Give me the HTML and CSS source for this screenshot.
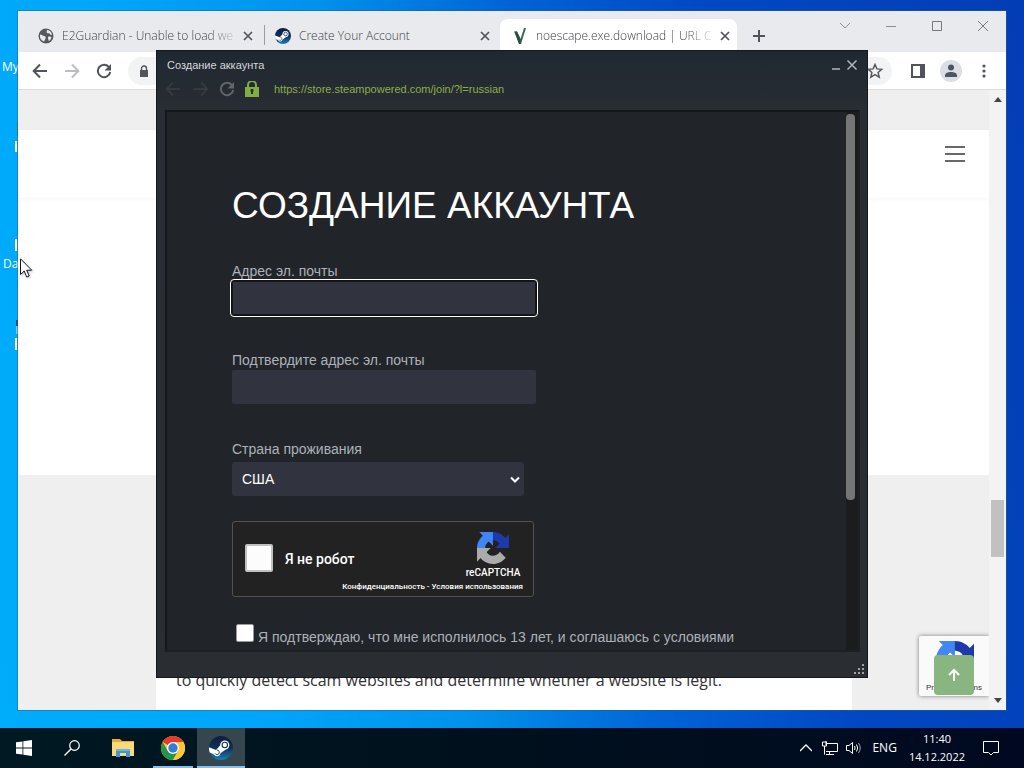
FILE: index.html
```
<!DOCTYPE html>
<html lang="ru">
<head>
<meta charset="utf-8">
<title>Создание аккаунта</title>
<link rel="stylesheet" href="styles.css">
</head>
<body>
<svg class="defs" aria-hidden="true">
  <defs>
    <linearGradient id="steam-bg" x1="0" y1="0" x2="0" y2="1">
      <stop offset="0" stop-color="#101d3c"/><stop offset=".5" stop-color="#0d2f5c"/><stop offset="1" stop-color="#1a80b4"/>
    </linearGradient>
    <symbol id="steam" viewBox="0 0 24 24">
      <circle cx="12" cy="12" r="12" fill="url(#steam-bg)"/>
      <path d="M0 11.2 7 14 12 8.5 19.5 11.500 11.500 17.200A3.500 3.500 0 0 1 5 18.500L.7 16.500A12 12 0 0 1 0 11.200Z" fill="#fff"/>
      <circle cx="15.800" cy="9" r="4.600" fill="#fff"/>
      <circle cx="15.800" cy="9" r="2.700" fill="#fff" stroke="#14305a" stroke-width="1.100"/>
      <path d="M6 17.300a2.300 2.300 0 1 0 2-3.300" fill="none" stroke="#14477a" stroke-width="1"/>
    </symbol>
    <symbol id="recaptcha" viewBox="0 0 64 64">
      <path fill="#1c3aa9" d="M64 31.955l-.033-1.370V4.687l-7.160 7.160C50.948 4.674 42.033.093 32.050.093c-10.400 0-19.622 4.960-25.458 12.640l11.736 11.860a15.550 15.550 0 0 1 4.754-5.334c2.050-1.600 4.952-2.906 8.968-2.906.485 0 .860.057 1.135.163 4.976.393 9.288 3.140 11.828 7.124l-8.307 8.307L64 31.953"/>
      <path fill="#4285f4" d="M31.862.094l-1.370.033H4.594l7.160 7.160C4.580 13.147 0 22.060 0 32.046c0 10.400 4.960 19.622 12.640 25.458L24.500 45.768a15.550 15.550 0 0 1-5.334-4.754c-1.600-2.050-2.906-4.952-2.906-8.968 0-.485.057-.860.163-1.135.393-4.976 3.140-9.288 7.124-11.828l8.307 8.307L31.860.095"/>
      <path fill="#ababab" d="M.001 32.045l.033 1.370v25.898l7.160-7.160c5.860 7.173 14.774 11.754 24.760 11.754 10.400 0 19.622-4.960 25.458-12.640l-11.736-11.860a15.550 15.550 0 0 1-4.754 5.334c-2.050 1.600-4.952 2.906-8.968 2.906-.485 0-.860-.057-1.135-.163-4.976-.393-9.288-3.140-11.828-7.124l8.307-8.307c-10.522.040-22.400.066-27.295-.005"/>
    </symbol>
    <symbol id="close" viewBox="0 0 12 12"><path d="M2 2l8 8M10 2l-8 8" stroke="currentColor" stroke-width="1.700"/></symbol>
    <symbol id="back" viewBox="0 0 16 16"><path d="M15 8H2M8 1.500 1.700 8 8 14.500" fill="none" stroke="currentColor" stroke-width="2"/></symbol>
    <symbol id="reload" viewBox="0 0 16 16"><path d="M13.200 4.500A6.200 6.200 0 1 0 14.200 9" fill="none" stroke="currentColor" stroke-width="2"/><path d="M15 1v6.500H8.500Z" fill="currentColor"/></symbol>
  </defs>
</svg>

<div class="desktop">
  <span class="shortcut shortcut-my">My</span>
  <span class="shortcut shortcut-da">Da</span>
  <svg class="slivers" viewBox="0 0 4 240" aria-hidden="true">
    <path d="M3 2v14" stroke="#159a4c" stroke-width="2"/>
    <path d="M1 21v11M1 119v12M1 218v12" stroke="#fff" stroke-width="2"/>
    <path d="M2 200v14" stroke="#e5f4ff" stroke-width="1"/><path d="M2 200v6" stroke="#254869" stroke-width="2"/>
  </svg>

  <section class="browser" aria-label="Chrome">
    <div class="tabs">
      <div class="tab tab-first">
        <svg class="fav" viewBox="0 0 16 16"><circle cx="8" cy="8" r="7.500" fill="#55595e"/><path d="M2 6.500c2 0 2.500 1.500 4 1.500s2 1 1.500 2.500L6 13.500C3 12.500 1.500 10 2 6.500ZM8.500 2c1 1-.5 2 .5 3s2.500-.5 3 1 1.500 1 2 .5C13.500 4 11.500 2 8.500 2ZM10 9c1-.8 3-.5 3.500.5-.5 1.500-1.500 3-3 3.500C11 11.500 9.500 10.500 10 9Z" fill="#e8eaee"/></svg>
        <span class="tab-title fade">E2Guardian - Unable to load we</span>
        <button class="icon-btn" aria-label="Close tab"><svg class="x"><use href="#close"/></svg></button>
      </div>
      <div class="tab tab-second">
        <svg class="fav"><use href="#steam"/></svg>
        <span class="tab-title">Create Your Account</span>
        <button class="icon-btn" aria-label="Close tab"><svg class="x"><use href="#close"/></svg></button>
      </div>
      <div class="tab tab-active">
        <svg class="fav" viewBox="0 0 16 16"><path d="M2 3.500h3L8.500 11 12 0h2L9 16H7Z" fill="#3c6659"/><path d="M3 3.500h2L8.500 11v5H7Z" fill="#304941"/></svg>
        <span class="tab-title fade">noescape.exe.download | URL C</span>
        <button class="icon-btn" aria-label="Close tab"><svg class="x"><use href="#close"/></svg></button>
      </div>
      <button class="icon-btn new-tab" aria-label="New tab"><svg class="i14" viewBox="0 0 14 14"><path d="M7 1v12M1 7h12" stroke="#50545a" stroke-width="2"/></svg></button>
      <div class="win-controls">
        <button class="icon-btn" aria-label="Search tabs"><svg class="i12" viewBox="0 0 12 12"><path d="M1 3l5 5 5-5" fill="none" stroke="#8b8d91"/></svg></button>
        <button class="icon-btn" aria-label="Minimize"><svg class="i12" viewBox="0 0 12 12"><path d="M1 6.500h10" stroke="#8b8d91"/></svg></button>
        <button class="icon-btn" aria-label="Maximize"><svg class="i12" viewBox="0 0 12 12"><path d="M1.500 1.500h9v9h-9Z" fill="none" stroke="#76787c"/></svg></button>
        <button class="icon-btn" aria-label="Close"><svg class="i12" viewBox="0 0 12 12"><path d="M1 1l10 10M11 1 1 11" stroke="#76787c"/></svg></button>
      </div>
    </div>
    <div class="toolbar">
      <button class="icon-btn" aria-label="Back"><svg class="i16"><use href="#back"/></svg></button>
      <button class="icon-btn forward pale" aria-label="Forward"><svg class="i16"><use href="#back"/></svg></button>
      <button class="icon-btn" aria-label="Reload"><svg class="i16"><use href="#reload"/></svg></button>
      <div class="omnibox">
        <svg class="i12" viewBox="0 0 12 12"><path d="M2 5h8v7H2Z" fill="#53575c"/><path d="M3.500 5.500V3.500a2.500 2.500 0 0 1 5 0v2" fill="none" stroke="#53575c" stroke-width="1.400"/></svg>
        <button class="icon-btn" aria-label="Bookmark"><svg class="i16" viewBox="0 0 16 16"><path d="M8 1.500l1.900 4.400 4.800.4-3.600 3.100 1.100 4.700L8 11.600l-4.200 2.500 1.100-4.700L1.300 6.300l4.800-.4Z" fill="none" stroke="#55595e" stroke-width="1.500"/></svg></button>
      </div>
      <button class="icon-btn side-btn" aria-label="Side panel"><svg class="i14" viewBox="0 0 14 14"><path d="M1 1h12v12H1Z" fill="none" stroke="#50545a" stroke-width="2"/><path d="M9 1h4v12H9Z" fill="#50545a"/></svg></button>
      <button class="icon-btn avatar" aria-label="Profile"><svg class="i16" viewBox="0 0 16 16"><circle cx="8" cy="4.500" r="3" fill="#4b5563"/><path d="M2 14v-1.500C2 10 5 9 8 9s6 1 6 3.500V14Z" fill="#4b5563"/></svg></button>
      <button class="icon-btn" aria-label="Menu"><svg class="i16" viewBox="0 0 16 16"><g fill="#50545a"><circle cx="8" cy="3" r="1.600"/><circle cx="8" cy="8" r="1.600"/><circle cx="8" cy="13" r="1.600"/></g></svg></button>
    </div>
    <div class="viewport">
      <main class="page">
        <header class="site-header">
          <button class="icon-btn" aria-label="Site menu"><svg class="burger" viewBox="0 0 20 18"><path d="M0 2h20M0 9h20M0 16h20" stroke="#686868" stroke-width="2"/></svg></button>
        </header>
        <div class="hero"></div>
        <article class="article"><p>to quickly detect scam websites and determine whether a website is legit.</p></article>
        <aside class="badge">
          <svg class="badge-logo"><use href="#recaptcha"/></svg>
          <span class="badge-text"><span>Pr</span><span>ns</span></span>
          <button class="to-top" aria-label="Scroll to top"><svg class="i14" viewBox="0 0 14 14"><path d="M7 13V2M2 7l5-5 5 5" fill="none" stroke="#fff" stroke-width="2"/></svg></button>
        </aside>
      </main>
      <div class="scrollbar" aria-hidden="true">
        <svg class="arrow" viewBox="0 0 8 5"><path d="M4 0l4 5H0Z" fill="#444"/></svg>
        <span class="scroll-thumb"></span>
        <svg class="arrow arrow-down" viewBox="0 0 8 5"><path d="M4 5l4-5H0Z" fill="#444"/></svg>
      </div>
    </div>
  </section>

  <section class="steam" aria-label="Создание аккаунта">
    <div class="steam-title">
      <span>Создание аккаунта</span>
      <button class="icon-btn" aria-label="Свернуть"><svg class="i12" viewBox="0 0 12 12"><path d="M2 10h8" stroke="#b3b6ba" stroke-width="1.500"/></svg></button>
      <button class="icon-btn" aria-label="Закрыть"><svg class="i12" viewBox="0 0 12 12"><path d="M1.500 1.500l9 9M10.500 1.500l-9 9" stroke="#b3b6ba" stroke-width="1.500"/></svg></button>
    </div>
    <div class="steam-nav">
      <button class="icon-btn dim" aria-label="Назад"><svg class="i16"><use href="#back"/></svg></button>
      <button class="icon-btn dim forward" aria-label="Вперёд"><svg class="i16"><use href="#back"/></svg></button>
      <button class="icon-btn mid" aria-label="Обновить"><svg class="i16"><use href="#reload"/></svg></button>
      <svg class="lock" viewBox="0 0 14 16"><path d="M0 6h14v10H0Z" fill="#82ad45"/><path d="M3 6V4a4 4 0 0 1 8 0v2" fill="none" stroke="#82ad45" stroke-width="2"/><path d="M7 8v5M5.500 9.500h3" stroke="#26331e" stroke-width="2"/></svg>
      <a class="address" href="https://store.steampowered.com/join/?l=russian">https://store.steampowered.com/join/?l=russian</a>
    </div>
    <div class="steam-view">
      <form class="join">
        <h1>СОЗДАНИЕ АККАУНТА</h1>
        <div class="field">
          <label for="email">Адрес эл. почты</label>
          <input class="text focused" id="email" type="email">
        </div>
        <div class="field">
          <label for="email2">Подтвердите адрес эл. почты</label>
          <input class="text" id="email2" type="email">
        </div>
        <div class="field field-country">
          <label for="country">Страна проживания</label>
          <span class="select-wrap">
            <select id="country"><option>США</option></select>
            <svg class="chevron" viewBox="0 0 10 8"><path d="M1 1.500l4 4 4-4" fill="none" stroke="#fff" stroke-width="2"/></svg>
          </span>
        </div>
        <div class="captcha">
          <input class="robot" id="robot" type="checkbox">
          <label class="robot-label" for="robot">Я не робот</label>
          <div class="captcha-side">
            <svg class="captcha-logo"><use href="#recaptcha"/></svg>
            <span class="captcha-name">reCAPTCHA</span>
          </div>
          <div class="captcha-links"><a href="#privacy">Конфиденциальность</a> - <a href="#terms">Условия использования</a></div>
        </div>
        <div class="agree">
          <input class="tick" id="agree" type="checkbox">
          <label for="agree">Я подтверждаю, что мне исполнилось 13 лет, и соглашаюсь с условиями</label>
        </div>
      </form>
      <div class="steam-scroll" aria-hidden="true"><span class="steam-thumb"></span></div>
    </div>
    <svg class="grip" viewBox="0 0 10 10" aria-hidden="true"><path d="M8 0h2v2H8ZM4 4h2v2H4ZM8 4h2v2H8ZM0 8h2v2H0ZM4 8h2v2H4ZM8 8h2v2H8Z" fill="#a0a3a6"/></svg>
  </section>

  <svg class="cursor" viewBox="0 0 13 20" aria-hidden="true"><path d="M.5.800v15.700l3.700-3.500 2.500 6 2.500-1-2.500-5.800h5Z" fill="#fff" stroke="#151a28"/></svg>
</div>

<footer class="taskbar">
  <button class="task" aria-label="Пуск"><svg class="i16" viewBox="0 0 16 16"><path d="M0 2.300 6.500 1.400v6.100H0ZM7.300 1.300 16 0v7.500H7.300ZM0 8.400h6.500v6.200L0 13.700ZM7.300 8.400H16V16l-8.700-1.300Z" fill="#fff"/></svg></button>
  <button class="task" aria-label="Поиск"><svg class="i16" viewBox="0 0 16 16"><circle cx="10.500" cy="5.500" r="4.800" fill="none" stroke="#fff" stroke-width="1.200"/><path d="M7 9 .5 15.500" stroke="#fff" stroke-width="1.400"/></svg></button>
  <button class="task task-wide" aria-label="Проводник"><svg class="i24" viewBox="0 0 24 24"><path d="M1 3h8l2 2h12v15H1Z" fill="#e6ae2e"/><path d="M1 6h22v14H1Z" fill="#fbd979"/><path d="M5 13h14v8h-4v-4H9v4H5Z" fill="#3f98d3"/><path d="M5 13h14v2H5Z" fill="#66b6e4"/></svg></button>
  <button class="task running" aria-label="Chrome"><svg class="i24" viewBox="0 0 24 24"><circle cx="12" cy="12" r="12" fill="#fcc934"/><path d="M12 12 1.600 6A12 12 0 0 1 22.400 6H12Z" fill="#e33b2e"/><path d="M1.600 6A12 12 0 0 0 12 24l5.200-9L12 12l-5.200 3Z" fill="#23964a"/><path d="M22.400 6H12l5.200 9L12 24A12 12 0 0 0 22.400 6Z" fill="#fcc934"/><circle cx="12" cy="12" r="6" fill="#fff"/><circle cx="12" cy="12" r="4.700" fill="#347de0"/></svg></button>
  <button class="task running active" aria-label="Steam"><svg class="i24"><use href="#steam"/></svg></button>
  <div class="tray">
    <button class="icon-btn" aria-label="Скрытые значки"><svg class="i12" viewBox="0 0 12 12"><path d="M0 9l6-6 6 6" fill="none" stroke="#fff" stroke-width="1.300"/></svg></button>
    <svg class="i16" viewBox="0 0 16 16"><path d="M4.500 3.500h11v8H4M4 1v4M7.500 11.500v3M4 14.500h8" fill="none" stroke="#fff"/><path d="M.5 2h4v4h-4ZM2.500 6v8.500" fill="none" stroke="#fff"/></svg>
    <svg class="i16" viewBox="0 0 16 16"><path d="M.5 5.500H3l3.500-3v11L3 10.500H.5ZM8.500 6q1.200 2 0 4M10.500 4.500q2.400 3.500 0 7" fill="none" stroke="#fff"/><path d="M12.500 3q3.500 5 0 10" fill="none" stroke="#a0a8ad"/></svg>
    <span class="lang">ENG</span>
    <time class="clock" datetime="2022-12-14T11:40"><span>11:40</span><span>14.12.2022</span></time>
    <button class="icon-btn" aria-label="Уведомления"><svg class="i16" viewBox="0 0 16 16"><path d="M.5 1.500h15v11h-5L8 15l-2.500-2.500h-5Z" fill="none" stroke="#fff"/></svg></button>
  </div>
</footer>
</body>
</html>
```

FILE: styles.css
```
* { box-sizing: border-box; }

body {
  margin: 0;
  min-height: 100vh;
  display: flex;
  flex-direction: column;
  overflow: hidden;
  font-family: "Liberation Sans", Arial, sans-serif;
}

button { font: inherit; }
svg { display: block; flex: none; }
.defs { position: absolute; width: 0; height: 0; }

.icon-btn {
  display: flex;
  align-items: center;
  justify-content: center;
  padding: 0;
  border: 0;
  background: none;
  color: #50545a;
}
.i12, .x { width: 12px; height: 12px; }
.i14 { width: 14px; height: 14px; }
.i16, .fav { width: 16px; height: 16px; }
.i24 { width: 24px; height: 24px; }
.forward { transform: scaleX(-1); }
.pale { color: #bbbdc0; }

/* Desktop */
.desktop {
  position: relative;
  flex: 1;
  background: linear-gradient(78deg, #00adfa 0%, #00a6fa 22%, #0092ec 40%, #0064d6 56%, #0049c4 72%, #033db5 100%);
}
.shortcut {
  position: absolute;
  color: #fff;
  font: 12px/16px "Open Sans", "Noto Sans", sans-serif;
}
.shortcut-my { left: 2px; top: 59px; }
.shortcut-da { left: 3px; top: 256px; }
.slivers { position: absolute; left: 15px; top: 120px; width: 4px; height: 240px; }
.cursor { position: absolute; left: 20px; top: 258px; width: 13px; height: 20px; filter: drop-shadow(1px 1px 1px #8888); }

/* Browser window */
.browser {
  position: absolute;
  inset: 11px 18px 18px 18px;
  isolation: isolate;
  display: flex;
  flex-direction: column;
  background: #fff;
  box-shadow: 0 0 0 1px #2a5f8a80;
}
.tabs {
  display: flex;
  align-items: flex-end;
  height: 41px;
  padding-left: 16px;
  background: #e9eaed;
}
.tab {
  display: flex;
  align-items: center;
  gap: 8px;
  height: 33px;
  padding: 0 10px 0 13px;
  color: #404347;
  font: 300 12px/16px "Open Sans", "Noto Sans", sans-serif;
}
.tab-first { width: 230px; padding: 0 10px 0 4px; }
.tab-second { position: relative; width: 236px; padding: 0 9px 0 11px; }
.tab-second::before { content: ""; position: absolute; left: 0; top: 6px; width: 1px; height: 20px; background: #9b9da1; }
.tab-active { width: 237px; background: #fff; border-radius: 8px 8px 0 0; padding-left: 12px; }
.tab-title { flex: 1; white-space: nowrap; }
.fade { mask-image: linear-gradient(90deg, #000 85%, #0003); }
.new-tab { width: 44px; height: 32px; }
.win-controls { display: flex; align-self: flex-start; margin-left: auto; }
.win-controls .icon-btn { width: 46px; height: 29px; }

.toolbar {
  display: flex;
  align-items: center;
  gap: 16px;
  height: 38px;
  padding: 0 14px;
  border-bottom: 1px solid #dcdcdc;
}
.omnibox {
  flex: 1;
  display: flex;
  align-items: center;
  justify-content: space-between;
  height: 28px;
  padding: 0 9px 0 10px;
  border-radius: 14px;
  background: #f1f3f4;
}
.side-btn { width: 20px; }
.avatar { width: 22px; height: 22px; margin-left: -4px; border-radius: 50%; background: #dbdee4; }
.toolbar .icon-btn:last-child { margin-left: -2px; }

.viewport { flex: 1; display: flex; min-height: 0; }
.page {
  position: relative;
  flex: 1;
  display: flex;
  flex-direction: column;
  padding-top: 40px;
  background: #efefef;
  overflow: hidden;
}
.site-header {
  display: flex;
  align-items: center;
  justify-content: flex-end;
  height: 68px;
  padding: 0 24px 20px 0;
  background: #fff;
  box-shadow: 0 1px 4px #0000000c;
  z-index: 1;
}
.burger { width: 20px; height: 18px; }
.hero { height: 277px; background: #fff; }
.article {
  flex: 1;
  display: flex;
  align-items: flex-end;
  width: 696px;
  margin-left: 138px;
  padding: 0 20px 18px;
  background: #fff;
  color: #333;
  font: 16px/24px "Open Sans", "Noto Sans", sans-serif;
}
.article p { margin: 0; white-space: nowrap; }

.badge {
  position: absolute;
  right: 0;
  bottom: 14px;
  width: 70px;
  height: 60px;
  padding: 5px 7px 2px;
  border-radius: 2px 0 0 2px;
  background: #fafafa;
  box-shadow: 0 0 4px #777;
}
.badge-logo { width: 38px; height: 38px; margin-left: 10px; }
.badge-text { display: flex; justify-content: space-between; margin-top: 4px; color: #333; font-size: 8px; line-height: 10px; }
.to-top {
  position: absolute;
  right: 15px;
  bottom: 1px;
  display: flex;
  align-items: center;
  justify-content: center;
  width: 40px;
  height: 40px;
  border: 0;
  border-radius: 4px;
  background: #89b581;
}
.scrollbar {
  display: flex;
  flex-direction: column;
  align-items: center;
  justify-content: space-between;
  width: 17px;
  padding: 7px 0;
  background: #f3f3f3;
}
.arrow { width: 8px; height: 5px; }
.scroll-thumb { width: 13px; height: 57px; margin-top: 256px; background: #c1c1c1; }

/* Steam window */
.steam {
  position: absolute;
  left: 156px;
  top: 50px;
  display: flex;
  flex-direction: column;
  width: 712px;
  height: 628px;
  padding: 0 7px 0 8px;
  border: 1px solid #16191d;
  background: linear-gradient(#1f2831 0, #292d33 60px, #2a2e33);
}
.steam-title {
  display: flex;
  align-items: center;
  gap: 4px;
  height: 28px;
  padding: 0 2px;
  color: #d5d8db;
  font-size: 11px;
  line-height: 16px;
}
.steam-title span { flex: 1; }
.steam-nav { display: flex; align-items: center; height: 20px; gap: 12px; }
.dim { color: #363a3f; }
.mid { color: #62666b; }
.steam-nav .mid { margin-left: -2px; }
.lock { width: 14px; height: 16px; margin-left: -2px; }
.address { margin-left: 3px; color: #8dad49; font-size: 11px; line-height: 16px; text-decoration: none; }
.steam-view {
  flex: 1;
  display: flex;
  min-height: 0;
  margin: 11px 0 25px;
  border: 2px solid #1a1d21;
  border-color: #15181b #1d2023 #1d2023 #15181b;
  background: #212429;
  overflow: hidden;
}
.join { flex: 1; padding: 72px 0 0 65px; color: #acb2b8; font-size: 14px; line-height: 18px; }
.join h1 { margin: 0 0 34px; color: #fff; font-size: 37px; font-weight: 400; line-height: 44px; }
.field { display: flex; flex-direction: column; align-items: flex-start; gap: 1px; margin-bottom: 36px; }
.text {
  width: 304px;
  height: 34px;
  padding: 0 8px;
  border: 0;
  border-radius: 2px;
  background: #31343e;
  color: #fff;
  font: inherit;
}
.focused { outline: 1px solid #fff; outline-offset: 1px; box-shadow: 0 0 0 1px #111, inset 0 0 0 1px #15171c; }
.field-country { gap: 4px; margin-bottom: 25px; }
.select-wrap { position: relative; width: 292px; }
.select-wrap select {
  display: block;
  width: 100%;
  height: 34px;
  padding: 0 10px;
  border: 0;
  border-radius: 3px;
  background: #31343e;
  color: #fff;
  font: inherit;
  appearance: none;
}
.chevron { position: absolute; right: 4px; top: 14px; width: 10px; height: 8px; pointer-events: none; }

.captcha {
  display: grid;
  grid-template-columns: 28px 1fr 60px;
  align-items: end;
  column-gap: 12px;
  width: 302px;
  height: 76px;
  padding: 9px 10px 4px 12px;
  border: 1px solid #525252;
  border-radius: 3px;
  background: #222;
  color: #fff;
}
.robot {
  appearance: none;
  width: 28px;
  height: 28px;
  margin: 0 0 10px;
  border: 2px solid #c1c1c1;
  border-radius: 2px;
  background: #fcfcfc;
}
.robot-label { margin-bottom: 14px; font: 500 14px/18px Roboto, sans-serif; }
.captcha-side { display: flex; flex-direction: column; align-items: center; }
.captcha-logo { width: 32px; height: 32px; }
.captcha-name { font: 500 10px/18px Roboto, sans-serif; }
.captcha-links { grid-column: 1 / -1; text-align: right; font: 500 8px/10px Roboto, sans-serif; }
.captcha-links a { color: inherit; text-decoration: none; }

.agree { display: flex; align-items: flex-end; gap: 4px; padding: 27px 0 0 4px; white-space: nowrap; }
.tick { appearance: none; width: 18px; height: 18px; margin: 0 0 4px; border: 1px solid #999; border-radius: 2px; background: #fff; }

.steam-scroll { width: 12px; padding-top: 2px; background: #1b1c1e; }
.steam-thumb { display: block; width: 9px; height: 386px; border-radius: 4px; background: #757575; }
.grip { position: absolute; right: 3px; bottom: 3px; width: 10px; height: 10px; }

/* Taskbar */
.taskbar { display: flex; height: 40px; background: linear-gradient(90deg, #001922, #00101d 50%, #000921); }
.task {
  display: flex;
  align-items: center;
  justify-content: center;
  width: 48px;
  padding: 0;
  border: 0;
  background: none;
}
.task-wide { width: 53px; }
.running { background: linear-gradient(#85bdec, #85bdec) center bottom / 40px 2px no-repeat; }
.active { background-color: #35464f; background-size: 100% 2px; }
.tray {
  display: flex;
  align-items: center;
  gap: 8px;
  margin-left: auto;
  padding-right: 25px;
  color: #fff;
  font: 12px/18px "Open Sans", "Noto Sans", sans-serif;
}
.tray > .icon-btn:first-child { margin-right: 2px; }
.lang { margin-left: 2px; }
.clock { display: flex; flex-direction: column; align-items: center; margin: 0 10px 0 4px; font-size: 11px; }
```
